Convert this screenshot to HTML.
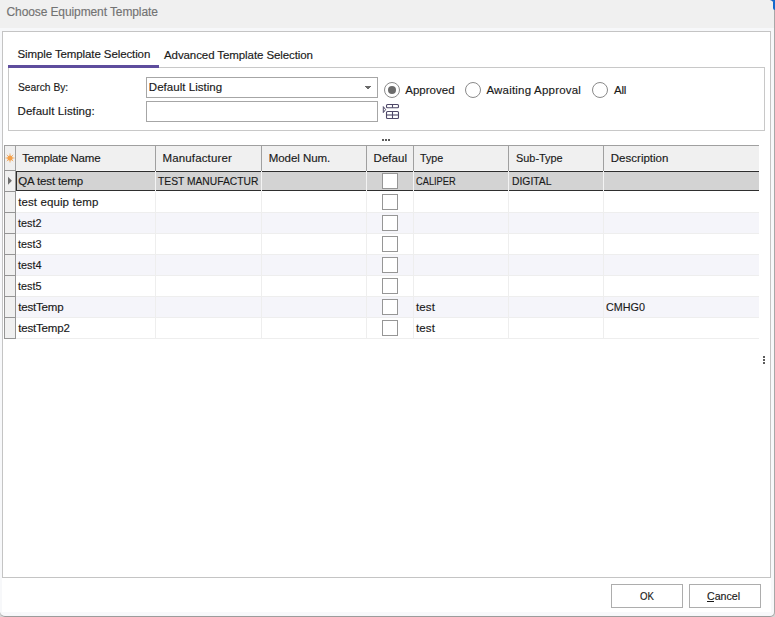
<!DOCTYPE html>
<html><head><meta charset="utf-8"><style>
html,body{margin:0;padding:0;}
body{width:775px;height:617px;position:relative;overflow:hidden;background:#d6d6d6;font-family:"Liberation Sans",sans-serif;font-size:11.5px;}
.t{position:absolute;white-space:nowrap;line-height:14px;-webkit-text-stroke:0.15px currentColor;}
.b{position:absolute;}
</style></head><body>
<div class="b" style="left:770px;top:0px;width:5px;height:10px;background:#1568cc;border-radius:0 0 0 4px;"></div>
<div class="b" style="left:0px;top:0px;width:775px;height:617px;background:#f7f8fa;border-right:1px solid #a8a8a8;border-bottom:1px solid #9c9c9c;border-radius:0 6px 5px 5px;box-sizing:border-box;"></div>
<div class="b" style="left:0px;top:0px;width:774px;height:28px;background:#f0f0f0;border-radius:0 6px 0 0;"></div>
<div class="b" style="left:773px;top:2px;width:2px;height:8px;background:#1568cc;border-radius:0 0 0 2px;"></div>
<div class="b" style="left:2px;top:31px;width:769px;height:547px;background:#ffffff;border:1px solid #c4c4c4;box-sizing:border-box;"></div>
<div class="b" style="left:2px;top:578px;width:769px;height:34px;background:#ffffff;"></div>
<div class="b" style="left:2px;top:612px;width:769px;height:3px;background:#f8f9fb;"></div>
<div class="t" style="left:6.50px;top:5.00px;letter-spacing:-0.104px;color:#737373;font-size:12px;">Choose Equipment Template</div>
<div class="t" style="left:17.50px;top:47.00px;letter-spacing:-0.104px;color:#1a1a1a;font-size:11.5px;">Simple Template Selection</div>
<div class="t" style="left:164.00px;top:48.00px;letter-spacing:-0.088px;color:#1a1a1a;font-size:11.5px;">Advanced Template Selection</div>
<div class="b" style="left:8px;top:67px;width:757px;height:64px;border:1px solid #c8c8c8;box-sizing:border-box;"></div>
<div class="b" style="left:8px;top:65px;width:151px;height:3px;background:#5e4d9d;"></div>
<div class="t" style="left:17.50px;top:80.00px;letter-spacing:0.000px;color:#1a1a1a;font-size:11.5px;transform:scaleX(0.8929);transform-origin:0px 0;">Search By:</div>
<div class="t" style="left:17.50px;top:104.00px;letter-spacing:0.080px;color:#1a1a1a;font-size:11.5px;">Default Listing:</div>
<div class="b" style="left:146px;top:77px;width:232px;height:21px;border:1px solid #a6a6a6;box-sizing:border-box;background:#fff;"></div>
<div class="t" style="left:148.80px;top:80.00px;letter-spacing:0.036px;color:#1a1a1a;font-size:11.5px;">Default Listing</div>
<div class="b" style="left:365px;top:86px;width:6px;height:1px;background:#6a6a6a;"></div>
<div class="b" style="left:366px;top:87px;width:4px;height:1px;background:#6a6a6a;"></div>
<div class="b" style="left:367px;top:88px;width:2px;height:1px;background:#6a6a6a;"></div>
<div class="b" style="left:146px;top:101px;width:232px;height:21px;border:1px solid #a6a6a6;box-sizing:border-box;background:#fff;"></div>
<svg class="b" style="left:382px;top:103px" width="18" height="17" viewBox="0 0 18 17">
<path d="M1.3 3.6 L3.6 6.6 L1.3 9.6 Z" fill="none" stroke="#4e4868" stroke-width="1"/>
<rect x="4.5" y="1.5" width="12" height="3.2" rx="1" fill="none" stroke="#4e4868" stroke-width="1.1"/>
<line x1="10.5" y1="1.5" x2="10.5" y2="4.7" stroke="#4e4868" stroke-width="1.1"/>
<rect x="4.5" y="8.5" width="12" height="7" rx="1" fill="none" stroke="#4e4868" stroke-width="1.1"/>
<line x1="10.5" y1="8.5" x2="10.5" y2="15.5" stroke="#4e4868" stroke-width="1.1"/>
<line x1="4.5" y1="12" x2="16.5" y2="12" stroke="#4e4868" stroke-width="1.1"/>
</svg>
<svg class="b" style="left:383px;top:81px" width="18" height="18"><circle cx="9" cy="9" r="7.5" fill="#fff" stroke="#8a8a8a" stroke-width="1"/><circle cx="9" cy="9" r="4" fill="#6b6b6b"/></svg>
<svg class="b" style="left:464px;top:81px" width="18" height="18"><circle cx="9" cy="9" r="7.5" fill="#fff" stroke="#8a8a8a" stroke-width="1"/></svg>
<svg class="b" style="left:591px;top:81px" width="18" height="18"><circle cx="9" cy="9" r="7.5" fill="#fff" stroke="#8a8a8a" stroke-width="1"/></svg>
<div class="t" style="left:405.30px;top:83.00px;letter-spacing:0.000px;color:#1a1a1a;font-size:11.5px;">Approved</div>
<div class="t" style="left:486.40px;top:83.00px;letter-spacing:0.206px;color:#1a1a1a;font-size:11.5px;">Awaiting Approval</div>
<div class="t" style="left:614.00px;top:83.00px;letter-spacing:-0.200px;color:#1a1a1a;font-size:11.5px;">All</div>
<div class="b" style="left:382px;top:139px;width:2px;height:2px;background:#5c5c5c;"></div>
<div class="b" style="left:385px;top:139px;width:2px;height:2px;background:#5c5c5c;"></div>
<div class="b" style="left:388px;top:139px;width:2px;height:2px;background:#5c5c5c;"></div>
<div class="b" style="left:4px;top:145px;width:755px;height:1px;background:#a0a0a0;"></div>
<div class="b" style="left:4px;top:146px;width:755px;height:24px;background:#f0f0f0;"></div>
<div class="b" style="left:4px;top:170px;width:755px;height:1px;background:#f7f7f7;"></div>
<div class="b" style="left:4px;top:145px;width:1px;height:26px;background:#a0a0a0;"></div>
<div class="b" style="left:15px;top:145px;width:1px;height:26px;background:#a0a0a0;"></div>
<div class="b" style="left:155px;top:145px;width:1px;height:26px;background:#a0a0a0;"></div>
<div class="b" style="left:261px;top:145px;width:1px;height:26px;background:#a0a0a0;"></div>
<div class="b" style="left:366px;top:145px;width:1px;height:26px;background:#a0a0a0;"></div>
<div class="b" style="left:413px;top:145px;width:1px;height:26px;background:#a0a0a0;"></div>
<div class="b" style="left:508px;top:145px;width:1px;height:26px;background:#a0a0a0;"></div>
<div class="b" style="left:603px;top:145px;width:1px;height:26px;background:#a0a0a0;"></div>
<svg class="b" style="left:5px;top:153px" width="10" height="10" viewBox="0 0 10 10">
<g stroke="#f4a04a" stroke-width="1" opacity="0.75"><line x1="5" y1="0.5" x2="5" y2="9.5"/><line x1="0.5" y1="5" x2="9.5" y2="5"/><line x1="1.8" y1="1.8" x2="8.2" y2="8.2"/><line x1="8.2" y1="1.8" x2="1.8" y2="8.2"/></g><circle cx="5" cy="5" r="2.6" fill="#f4a04a"/></svg>
<div class="t" style="left:22.30px;top:151.00px;letter-spacing:-0.192px;color:#1a1a1a;font-size:11.5px;">Template Name</div>
<div class="t" style="left:162.60px;top:151.00px;letter-spacing:0.127px;color:#1a1a1a;font-size:11.5px;">Manufacturer</div>
<div class="t" style="left:268.70px;top:151.00px;letter-spacing:-0.044px;color:#1a1a1a;font-size:11.5px;">Model Num.</div>
<div class="t" style="left:373.60px;top:151.00px;letter-spacing:0.040px;color:#1a1a1a;font-size:11.5px;">Defaul</div>
<div class="t" style="left:419.70px;top:151.00px;letter-spacing:0.000px;color:#1a1a1a;font-size:11.5px;transform:scaleX(0.9308);transform-origin:0px 0;">Type</div>
<div class="t" style="left:515.60px;top:151.00px;letter-spacing:0.000px;color:#1a1a1a;font-size:11.5px;transform:scaleX(0.9480);transform-origin:0px 0;">Sub-Type</div>
<div class="t" style="left:610.80px;top:151.00px;letter-spacing:0.010px;color:#1a1a1a;font-size:11.5px;">Description</div>
<div class="b" style="left:155px;top:171px;width:1px;height:20px;background:#f3f3f3;"></div>
<div class="b" style="left:155px;top:171px;width:1px;height:21px;background:#f3f3f3;"></div>
<div class="b" style="left:261px;top:171px;width:1px;height:21px;background:#f3f3f3;"></div>
<div class="b" style="left:366px;top:171px;width:1px;height:21px;background:#f3f3f3;"></div>
<div class="b" style="left:413px;top:171px;width:1px;height:21px;background:#f3f3f3;"></div>
<div class="b" style="left:508px;top:171px;width:1px;height:21px;background:#f3f3f3;"></div>
<div class="b" style="left:603px;top:171px;width:1px;height:21px;background:#f3f3f3;"></div>
<div class="b" style="left:16px;top:171px;width:139px;height:20px;background:#d3d3d3;border-top:1px solid #2e2e2e;border-bottom:1px solid #2e2e2e;box-sizing:border-box;"></div>
<div class="b" style="left:156px;top:171px;width:105px;height:20px;background:#d3d3d3;border-top:1px solid #2e2e2e;border-bottom:1px solid #2e2e2e;box-sizing:border-box;"></div>
<div class="b" style="left:262px;top:171px;width:104px;height:20px;background:#d3d3d3;border-top:1px solid #2e2e2e;border-bottom:1px solid #2e2e2e;box-sizing:border-box;"></div>
<div class="b" style="left:367px;top:171px;width:46px;height:20px;background:#d3d3d3;border-top:1px solid #2e2e2e;border-bottom:1px solid #2e2e2e;box-sizing:border-box;"></div>
<div class="b" style="left:414px;top:171px;width:94px;height:20px;background:#d3d3d3;border-top:1px solid #2e2e2e;border-bottom:1px solid #2e2e2e;box-sizing:border-box;"></div>
<div class="b" style="left:509px;top:171px;width:94px;height:20px;background:#d3d3d3;border-top:1px solid #2e2e2e;border-bottom:1px solid #2e2e2e;box-sizing:border-box;"></div>
<div class="b" style="left:604px;top:171px;width:155px;height:20px;background:#d3d3d3;border-top:1px solid #2e2e2e;border-bottom:1px solid #2e2e2e;box-sizing:border-box;"></div>
<div class="b" style="left:16px;top:171px;width:1px;height:20px;background:#2e2e2e;"></div>
<div class="b" style="left:4px;top:170px;width:12px;height:22px;background:#f0f0f0;border:1px solid #959595;box-sizing:border-box;"></div>
<div class="t" style="left:18.20px;top:174.00px;letter-spacing:-0.136px;color:#1a1a1a;font-size:11.5px;">QA test temp</div>
<div class="t" style="left:158.00px;top:174.00px;letter-spacing:0.000px;color:#1a1a1a;font-size:11.5px;transform:scaleX(0.8938);transform-origin:0px 0;">TEST MANUFACTUR</div>
<div class="t" style="left:416.00px;top:174.00px;letter-spacing:0.000px;color:#1a1a1a;font-size:11.5px;transform:scaleX(0.8060);transform-origin:0px 0;">CALIPER</div>
<div class="t" style="left:511.50px;top:174.00px;letter-spacing:0.000px;color:#1a1a1a;font-size:11.5px;transform:scaleX(0.9000);transform-origin:0px 0;">DIGITAL</div>
<div class="b" style="left:382px;top:173px;width:16px;height:16px;background:#fff;border:1px solid #969696;box-sizing:border-box;"></div>
<div class="b" style="left:16px;top:192px;width:743px;height:20px;background:#ffffff;"></div>
<div class="b" style="left:16px;top:212px;width:743px;height:1px;background:#eeeeee;"></div>
<div class="b" style="left:155px;top:192px;width:1px;height:21px;background:#eeeeee;"></div>
<div class="b" style="left:261px;top:192px;width:1px;height:21px;background:#eeeeee;"></div>
<div class="b" style="left:366px;top:192px;width:1px;height:21px;background:#eeeeee;"></div>
<div class="b" style="left:413px;top:192px;width:1px;height:21px;background:#eeeeee;"></div>
<div class="b" style="left:508px;top:192px;width:1px;height:21px;background:#eeeeee;"></div>
<div class="b" style="left:603px;top:192px;width:1px;height:21px;background:#eeeeee;"></div>
<div class="b" style="left:4px;top:191px;width:12px;height:22px;background:#f0f0f0;border:1px solid #959595;box-sizing:border-box;"></div>
<div class="t" style="left:18.20px;top:195.00px;letter-spacing:0.107px;color:#1a1a1a;font-size:11.5px;">test equip temp</div>
<div class="b" style="left:382px;top:194px;width:16px;height:16px;background:#fff;border:1px solid #969696;box-sizing:border-box;"></div>
<div class="b" style="left:16px;top:213px;width:743px;height:20px;background:#f5f5fa;"></div>
<div class="b" style="left:16px;top:233px;width:743px;height:1px;background:#eeeeee;"></div>
<div class="b" style="left:155px;top:213px;width:1px;height:21px;background:#eeeeee;"></div>
<div class="b" style="left:261px;top:213px;width:1px;height:21px;background:#eeeeee;"></div>
<div class="b" style="left:366px;top:213px;width:1px;height:21px;background:#eeeeee;"></div>
<div class="b" style="left:413px;top:213px;width:1px;height:21px;background:#eeeeee;"></div>
<div class="b" style="left:508px;top:213px;width:1px;height:21px;background:#eeeeee;"></div>
<div class="b" style="left:603px;top:213px;width:1px;height:21px;background:#eeeeee;"></div>
<div class="b" style="left:4px;top:212px;width:12px;height:22px;background:#f0f0f0;border:1px solid #959595;box-sizing:border-box;"></div>
<div class="t" style="left:18.20px;top:216.00px;letter-spacing:0.000px;color:#1a1a1a;font-size:11.5px;transform:scaleX(0.9423);transform-origin:0px 0;">test2</div>
<div class="b" style="left:382px;top:215px;width:16px;height:16px;background:#fff;border:1px solid #969696;box-sizing:border-box;"></div>
<div class="b" style="left:16px;top:234px;width:743px;height:20px;background:#ffffff;"></div>
<div class="b" style="left:16px;top:254px;width:743px;height:1px;background:#eeeeee;"></div>
<div class="b" style="left:155px;top:234px;width:1px;height:21px;background:#eeeeee;"></div>
<div class="b" style="left:261px;top:234px;width:1px;height:21px;background:#eeeeee;"></div>
<div class="b" style="left:366px;top:234px;width:1px;height:21px;background:#eeeeee;"></div>
<div class="b" style="left:413px;top:234px;width:1px;height:21px;background:#eeeeee;"></div>
<div class="b" style="left:508px;top:234px;width:1px;height:21px;background:#eeeeee;"></div>
<div class="b" style="left:603px;top:234px;width:1px;height:21px;background:#eeeeee;"></div>
<div class="b" style="left:4px;top:233px;width:12px;height:22px;background:#f0f0f0;border:1px solid #959595;box-sizing:border-box;"></div>
<div class="t" style="left:18.20px;top:237.00px;letter-spacing:0.000px;color:#1a1a1a;font-size:11.5px;transform:scaleX(0.9423);transform-origin:0px 0;">test3</div>
<div class="b" style="left:382px;top:236px;width:16px;height:16px;background:#fff;border:1px solid #969696;box-sizing:border-box;"></div>
<div class="b" style="left:16px;top:255px;width:743px;height:20px;background:#f5f5fa;"></div>
<div class="b" style="left:16px;top:275px;width:743px;height:1px;background:#eeeeee;"></div>
<div class="b" style="left:155px;top:255px;width:1px;height:21px;background:#eeeeee;"></div>
<div class="b" style="left:261px;top:255px;width:1px;height:21px;background:#eeeeee;"></div>
<div class="b" style="left:366px;top:255px;width:1px;height:21px;background:#eeeeee;"></div>
<div class="b" style="left:413px;top:255px;width:1px;height:21px;background:#eeeeee;"></div>
<div class="b" style="left:508px;top:255px;width:1px;height:21px;background:#eeeeee;"></div>
<div class="b" style="left:603px;top:255px;width:1px;height:21px;background:#eeeeee;"></div>
<div class="b" style="left:4px;top:254px;width:12px;height:22px;background:#f0f0f0;border:1px solid #959595;box-sizing:border-box;"></div>
<div class="t" style="left:18.20px;top:258.00px;letter-spacing:0.000px;color:#1a1a1a;font-size:11.5px;transform:scaleX(0.9423);transform-origin:0px 0;">test4</div>
<div class="b" style="left:382px;top:257px;width:16px;height:16px;background:#fff;border:1px solid #969696;box-sizing:border-box;"></div>
<div class="b" style="left:16px;top:276px;width:743px;height:20px;background:#ffffff;"></div>
<div class="b" style="left:16px;top:296px;width:743px;height:1px;background:#eeeeee;"></div>
<div class="b" style="left:155px;top:276px;width:1px;height:21px;background:#eeeeee;"></div>
<div class="b" style="left:261px;top:276px;width:1px;height:21px;background:#eeeeee;"></div>
<div class="b" style="left:366px;top:276px;width:1px;height:21px;background:#eeeeee;"></div>
<div class="b" style="left:413px;top:276px;width:1px;height:21px;background:#eeeeee;"></div>
<div class="b" style="left:508px;top:276px;width:1px;height:21px;background:#eeeeee;"></div>
<div class="b" style="left:603px;top:276px;width:1px;height:21px;background:#eeeeee;"></div>
<div class="b" style="left:4px;top:275px;width:12px;height:22px;background:#f0f0f0;border:1px solid #959595;box-sizing:border-box;"></div>
<div class="t" style="left:18.20px;top:279.00px;letter-spacing:0.000px;color:#1a1a1a;font-size:11.5px;transform:scaleX(0.9423);transform-origin:0px 0;">test5</div>
<div class="b" style="left:382px;top:278px;width:16px;height:16px;background:#fff;border:1px solid #969696;box-sizing:border-box;"></div>
<div class="b" style="left:16px;top:297px;width:743px;height:20px;background:#f5f5fa;"></div>
<div class="b" style="left:16px;top:317px;width:743px;height:1px;background:#eeeeee;"></div>
<div class="b" style="left:155px;top:297px;width:1px;height:21px;background:#eeeeee;"></div>
<div class="b" style="left:261px;top:297px;width:1px;height:21px;background:#eeeeee;"></div>
<div class="b" style="left:366px;top:297px;width:1px;height:21px;background:#eeeeee;"></div>
<div class="b" style="left:413px;top:297px;width:1px;height:21px;background:#eeeeee;"></div>
<div class="b" style="left:508px;top:297px;width:1px;height:21px;background:#eeeeee;"></div>
<div class="b" style="left:603px;top:297px;width:1px;height:21px;background:#eeeeee;"></div>
<div class="b" style="left:4px;top:296px;width:12px;height:22px;background:#f0f0f0;border:1px solid #959595;box-sizing:border-box;"></div>
<div class="t" style="left:18.20px;top:300.00px;letter-spacing:-0.171px;color:#1a1a1a;font-size:11.5px;">testTemp</div>
<div class="t" style="left:416.00px;top:300.00px;letter-spacing:0.100px;color:#1a1a1a;font-size:11.5px;">test</div>
<div class="t" style="left:606.20px;top:300.00px;letter-spacing:0.000px;color:#1a1a1a;font-size:11.5px;transform:scaleX(0.9381);transform-origin:0px 0;">CMHG0</div>
<div class="b" style="left:382px;top:299px;width:16px;height:16px;background:#fff;border:1px solid #969696;box-sizing:border-box;"></div>
<div class="b" style="left:16px;top:318px;width:743px;height:20px;background:#ffffff;"></div>
<div class="b" style="left:16px;top:338px;width:743px;height:1px;background:#eeeeee;"></div>
<div class="b" style="left:155px;top:318px;width:1px;height:21px;background:#eeeeee;"></div>
<div class="b" style="left:261px;top:318px;width:1px;height:21px;background:#eeeeee;"></div>
<div class="b" style="left:366px;top:318px;width:1px;height:21px;background:#eeeeee;"></div>
<div class="b" style="left:413px;top:318px;width:1px;height:21px;background:#eeeeee;"></div>
<div class="b" style="left:508px;top:318px;width:1px;height:21px;background:#eeeeee;"></div>
<div class="b" style="left:603px;top:318px;width:1px;height:21px;background:#eeeeee;"></div>
<div class="b" style="left:4px;top:317px;width:12px;height:22px;background:#f0f0f0;border:1px solid #959595;box-sizing:border-box;"></div>
<div class="t" style="left:18.20px;top:321.00px;letter-spacing:-0.175px;color:#1a1a1a;font-size:11.5px;">testTemp2</div>
<div class="t" style="left:416.00px;top:321.00px;letter-spacing:0.100px;color:#1a1a1a;font-size:11.5px;">test</div>
<div class="b" style="left:382px;top:320px;width:16px;height:16px;background:#fff;border:1px solid #969696;box-sizing:border-box;"></div>
<svg class="b" style="left:7px;top:176px" width="6" height="10"><path d="M1 0.8 L4.9 4.8 L1 8.8 Z" fill="#6e6e6e"/></svg>
<div class="b" style="left:763px;top:356px;width:2px;height:2px;background:#5c5c5c;"></div>
<div class="b" style="left:763px;top:359px;width:2px;height:2px;background:#5c5c5c;"></div>
<div class="b" style="left:763px;top:362px;width:2px;height:2px;background:#5c5c5c;"></div>
<div class="b" style="left:611px;top:584px;width:72px;height:24px;background:#ffffff;border:1px solid #adadad;box-sizing:border-box;"></div>
<div class="b" style="left:689px;top:584px;width:72px;height:24px;background:#ffffff;border:1px solid #adadad;box-sizing:border-box;"></div>
<div class="t" style="left:639.60px;top:589.00px;letter-spacing:0.000px;color:#1a1a1a;font-size:11.5px;transform:scaleX(0.8353);transform-origin:0px 0;">OK</div>
<div class="t" style="left:707.40px;top:589.00px;letter-spacing:0.000px;color:#1a1a1a;font-size:11.5px;transform:scaleX(0.9250);transform-origin:0px 0;">Cancel</div>
<div class="b" style="left:707px;top:601px;width:7px;height:1px;background:#1a1a1a;"></div>
</body></html>
